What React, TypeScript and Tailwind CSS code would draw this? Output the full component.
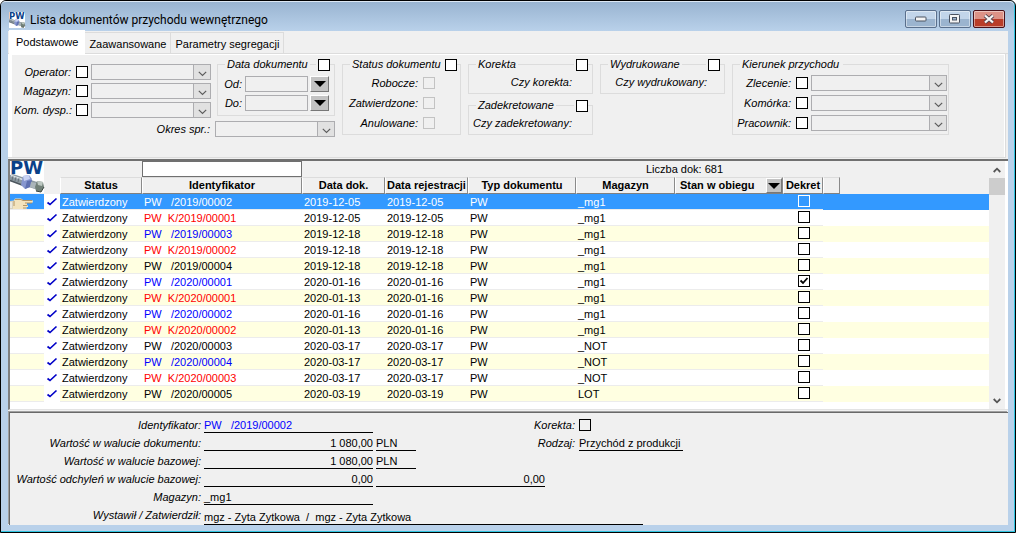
import { useState, type ReactNode } from 'react';

type Tone = 'black' | 'blue' | 'red';

interface Doc {
  id: string;
  tone: Tone;
  issued: string;
  registered: string;
  store: string;
  posted?: boolean;
}

const docs: Doc[] = [
  { id: 'PW   /2019/00002', tone: 'blue', issued: '2019-12-05', registered: '2019-12-05', store: '_mg1' },
  { id: 'PW  K/2019/00001', tone: 'red', issued: '2019-12-05', registered: '2019-12-05', store: '_mg1' },
  { id: 'PW   /2019/00003', tone: 'blue', issued: '2019-12-18', registered: '2019-12-18', store: '_mg1' },
  { id: 'PW  K/2019/00002', tone: 'red', issued: '2019-12-18', registered: '2019-12-18', store: '_mg1' },
  { id: 'PW   /2019/00004', tone: 'black', issued: '2019-12-18', registered: '2019-12-18', store: '_mg1' },
  { id: 'PW   /2020/00001', tone: 'blue', issued: '2020-01-16', registered: '2020-01-16', store: '_mg1', posted: true },
  { id: 'PW  K/2020/00001', tone: 'red', issued: '2020-01-13', registered: '2020-01-16', store: '_mg1' },
  { id: 'PW   /2020/00002', tone: 'blue', issued: '2020-01-16', registered: '2020-01-16', store: '_mg1' },
  { id: 'PW  K/2020/00002', tone: 'red', issued: '2020-01-13', registered: '2020-01-16', store: '_mg1' },
  { id: 'PW   /2020/00003', tone: 'black', issued: '2020-03-17', registered: '2020-03-17', store: '_NOT' },
  { id: 'PW   /2020/00004', tone: 'blue', issued: '2020-03-17', registered: '2020-03-17', store: '_NOT' },
  { id: 'PW  K/2020/00003', tone: 'red', issued: '2020-03-17', registered: '2020-03-17', store: '_NOT' },
  { id: 'PW   /2020/00005', tone: 'black', issued: '2020-03-19', registered: '2020-03-19', store: 'LOT' },
];

const toneClass: Record<Tone, string> = {
  black: 'text-black',
  blue: 'text-[#0000ff]',
  red: 'text-[#ff0000]',
};

function PwLogo({ className }: { className: string }) {
  return (
    <svg viewBox="0 0 34 32" preserveAspectRatio="none" className={`overflow-visible ${className}`} aria-hidden="true">
      <rect width="34" height="32" fill="#fff" />
      <g>
        <path d="M0 14 L3 13 L30 22 L28 29 L0 20Z" fill="#8b98a0" />
        <path d="M1 14.500 L14 19" stroke="#dce3e6" strokeWidth="1.6" />
        <path d="M0 19.500 L12 24" stroke="#4d565e" strokeWidth="1.4" />
        <path d="M3 15 l-1 4 M6 16 l-1 4 M9 17 l-1 4" stroke="#5d6870" strokeWidth="0.8" />
        <path d="M13 15 L19 14 L22 18 L20 26 L15 28 L11 24Z" fill="#8797cf" />
        <path d="M13 15 L19 14 L20 18 L14 20Z" fill="#c9d2f2" />
        <path d="M17 20 L22 19 L20 26 L15 28Z" fill="#5f70b0" />
        <path d="M21 21 L27 22 L26 28 L20 26Z" fill="#aab5ba" />
        <path d="M27 20 L33 21 L34 26 L31 31 L26 30 L25 26Z" fill="#718078" />
        <path d="M27 20 L33 21 L32 25 L28 24Z" fill="#bdc8c2" />
        <path d="M26 30 L31 31 L34 26" fill="none" stroke="#39443f" strokeWidth="1" />
      </g>
      <text x="0" y="13" fontFamily="DejaVu Sans, sans-serif" fontWeight="700" fontSize="18" fill="#0a4189">
        PW
      </text>
    </svg>
  );
}

function Check({ label, checked = false, disabled = false, light = false, clear = false, id }: {
  label?: string; checked?: boolean; disabled?: boolean; light?: boolean; clear?: boolean; id?: string;
}) {
  const [on, setOn] = useState(checked);
  const edge = disabled ? 'border-[#c3c3c3]' : light ? 'border-white' : 'border-black';
  const fill = disabled || clear ? 'bg-transparent' : 'bg-white';
  return (
    <span className="relative block size-3 shrink-0">
      <input
        id={id}
        type="checkbox"
        aria-label={label}
        checked={on}
        disabled={disabled}
        onChange={() => setOn(!on)}
        className={`block size-3 appearance-none border ${edge} ${fill}`}
      />
      {on && (
        <svg viewBox="0 0 12 12" className="pointer-events-none absolute inset-0 size-3">
          <path d="M2.500 5.500 L5 8 L9.500 3" fill="none" stroke="#000" strokeWidth="1.8" />
        </svg>
      )}
    </span>
  );
}

function Combo({ label, className }: { label: string; className: string }) {
  return (
    <span className={`relative block h-4 ${className}`}>
      <select aria-label={label} disabled className="block h-4 w-full appearance-none border border-[#adadb0] bg-[#f0f0f0] opacity-100">
        <option></option>
      </select>
      <span className="pointer-events-none absolute right-0 top-0 flex h-4 w-[18px] items-end justify-center border border-[#adadb0] bg-[#e1e1e1] pb-0.5">
        <svg viewBox="0 0 9 6" className="h-1.5 w-[9px]">
          <path d="M0.8 0.8 L4.5 4.5 L8.2 0.8" fill="none" stroke="#5f5f5f" strokeWidth="1.2" />
        </svg>
      </span>
    </span>
  );
}

function DropButton({ label, className }: { label: string; className: string }) {
  return (
    <button type="button" aria-label={label} className={`flex items-center justify-center border border-b-[#777] border-l-white border-r-[#777] border-t-white bg-[#c3c3c3] ${className}`}>
      <svg viewBox="0 0 12 6" className="h-1.5 w-3">
        <path d="M0 0 H12 L6 6Z" fill="#000" />
      </svg>
    </button>
  );
}

function Group({ title, check = true, className, children }: { title: string; check?: boolean; className: string; children: ReactNode }) {
  return (
    <fieldset className={`min-w-0 border border-[#dcdcdc] ${className}`}>
      <legend className={`ml-[7px] flex h-[13px] items-center gap-0.5 pl-0.5 ${check ? 'w-[calc(100%-11px)]' : 'pr-1'}`}>
        <span className="whitespace-nowrap">{title}</span>
        {check && (
          <>
            <span className="h-px flex-1 bg-[#dcdcdc]" />
            <Check label={title} />
          </>
        )}
      </legend>
      {children}
    </fieldset>
  );
}

function FilterRow({ label, id }: { label: string; id: string }) {
  return (
    <div className="flex h-4 items-center">
      <label htmlFor={id} className="w-[57px] whitespace-nowrap text-right">{label}</label>
      <span className="ml-[5px] mr-[3px]"><Check id={id} /></span>
      <Combo label={label} className="w-[120px]" />
    </div>
  );
}

function DateRow({ label, id }: { label: string; id: string }) {
  return (
    <div className="flex h-4 items-center">
      <label htmlFor={id} className="w-6 text-right">{label}</label>
      <input id={id} disabled className="ml-[3px] h-4 w-[63px] border border-[#adadb0] bg-[#f0f0f0]" />
      <DropButton label={`Wybierz: ${label}`} className="ml-0.5 h-4 w-[19px]" />
    </div>
  );
}

function Filters() {
  return (
    <div className="flex gap-[7px] bg-[#f0f0f0] pb-5 pl-0.5 pt-[3px] italic">
      <div className="flex w-[321px] shrink-0 flex-col gap-[3px]">
        <div className="flex items-start justify-between">
          <div className="flex flex-col gap-[3px] pt-1.5">
            <FilterRow label="Operator:" id="operator" />
            <FilterRow label="Magazyn:" id="magazyn" />
            <FilterRow label="Kom. dysp.:" id="komdysp" />
          </div>
          <Group title="Data dokumentu" className="w-[118px]">
            <div className="flex flex-col gap-[3px] pb-1 pt-[5px]">
              <DateRow label="Od:" id="od" />
              <DateRow label="Do:" id="do" />
            </div>
          </Group>
        </div>
        <div className="flex items-center justify-end gap-[5px]">
          <span>Okres spr.:</span>
          <Combo label="Okres spr." className="w-[120px]" />
        </div>
      </div>
      <Group title="Status dokumentu" className="h-[77px] w-[119px] shrink-0">
        <div className="flex flex-col gap-1 pr-[25px] pt-1">
          {['Robocze:', 'Zatwierdzone:', 'Anulowane:'].map((t) => (
            <label key={t} className="flex h-4 items-center justify-end gap-[5px]">
              {t}
              <Check disabled />
            </label>
          ))}
        </div>
      </Group>
      <div className="flex w-[125px] shrink-0 flex-col gap-[5px]">
        <Group title="Korekta" className="h-9">
          <p className="pr-5 pt-[5px] text-right">Czy korekta:</p>
        </Group>
        <Group title="Zadekretowane" className="h-9">
          <p className="whitespace-nowrap pr-5 pt-[5px] text-right">Czy zadekretowany:</p>
        </Group>
      </div>
      <Group title="Wydrukowane" className="h-9 w-[125px] shrink-0">
        <p className="whitespace-nowrap pr-[17px] pt-[5px] text-right">Czy wydrukowany:</p>
      </Group>
      <Group title="Kierunek przychodu" check={false} className="h-[77px] w-[217px] shrink-0">
        <div className="flex flex-col gap-1 pt-1">
          {['Zlecenie:', 'Komórka:', 'Pracownik:'].map((t) => (
            <div key={t} className="flex h-4 items-center">
              <label htmlFor={t} className="w-[58px] text-right">{t}</label>
              <span className="ml-[5px] mr-[3px]"><Check id={t} /></span>
              <Combo label={t} className="w-[136px]" />
            </div>
          ))}
        </div>
      </Group>
    </div>
  );
}

const headCell = 'h-[17px] overflow-hidden whitespace-nowrap border border-b-[#808080] border-l-white border-r-[#8a8a8a] border-t-[#dcdcdc] bg-[#f0f0f0] p-0 font-bold';

function Hand() {
  return (
    <svg viewBox="0 0 24 11" className="block h-[11px] w-6" aria-hidden="true">
      <path d="M0 3 L4 2.500 L5 0.500 H11 L13 2 H22 Q24 3.500 22 5 H17 V7 H18 V9 H16.500 V11 H0Z" fill="#f3e3bd" />
      <path d="M5 1.500 H11 L13 2.500 H22 M15 5 H22 M13 7.500 H17.500 M13 10 H16 M4 3 V8" fill="none" stroke="#ab8b5a" strokeWidth="0.9" />
      <path d="M0 3 H3 V11 H0Z" fill="#d8d2bf" />
      <path d="M1 4 v6" stroke="#fff" strokeWidth="1" />
    </svg>
  );
}

function DocTable() {
  return (
    <table className="w-full table-fixed border-separate border-spacing-0 text-left">
      <colgroup>
        <col className="w-[34px]" />
        <col className="w-4" />
        <col className="w-[82px]" />
        <col className="w-40" />
        <col className="w-[83px]" />
        <col className="w-[83px]" />
        <col className="w-[108px]" />
        <col className="w-[99px]" />
        <col className="w-[108px]" />
        <col className="w-10" />
        <col className="w-[17px]" />
        <col />
      </colgroup>
      <thead className="bg-[#f0f0f0]">
        <tr className="h-4">
          <td rowSpan={2} colSpan={2} className="p-0 align-top">
            <PwLogo className="block h-8 w-[34px]" />
          </td>
          <td className="p-0" />
          <td className="p-0">
            <input aria-label="Szukaj identyfikatora" className="block h-4 w-full border border-[#707070] bg-white px-1" />
          </td>
          <td colSpan={3} className="p-0" />
          <td colSpan={5} className="p-0 pl-[70px] pt-px">Liczba dok: 681</td>
        </tr>
        <tr className="text-center">
          <th className={headCell}>Status</th>
          <th className={headCell}>Identyfikator</th>
          <th className={headCell}>Data dok.</th>
          <th className={headCell}>Data rejestracji</th>
          <th className={headCell}>Typ dokumentu</th>
          <th className={headCell}>Magazyn</th>
          <th className={headCell}>
            <div className="flex items-center justify-between pl-1">
              <span>Stan w obiegu</span>
              <DropButton label="Filtr stanu w obiegu" className="h-[15px] w-4" />
            </div>
          </th>
          <th className={headCell}>Dekret</th>
          <th className={headCell} aria-label="Inne" />
          <td className="p-0" />
        </tr>
      </thead>
      <tbody>
        {docs.map((d, i) => {
          const selected = i === 0;
          const band = selected ? 'bg-[#3399ff] text-white' : i % 2 === 0 ? 'bg-[#ffffe1]' : 'bg-white';
          const cell = 'h-4 whitespace-nowrap border-b border-[#ececec] p-0 pl-0.5 pt-0.5';
          return (
            <tr key={d.id} className={band}>
              <td className="h-4 border-b border-[#ececec] p-0 align-bottom">{selected && <Hand />}</td>
              <td className="h-4 bg-white p-0">
                <svg viewBox="0 0 16 15" className="block h-[15px] w-4" aria-label="zatwierdzony">
                  <path d="M3.500 7.500 L6 9.500 L12.500 3.500" fill="none" stroke="#0000c8" strokeWidth="1.700" />
                </svg>
              </td>
              <td className={cell}>Zatwierdzony</td>
              <td className={`${cell} whitespace-pre ${selected ? 'text-white' : toneClass[d.tone]}`}>{d.id}</td>
              <td className={cell}>{d.issued}</td>
              <td className={cell}>{d.registered}</td>
              <td className={cell}>PW</td>
              <td className={cell}>{d.store}</td>
              <td className={cell} />
              <td className="h-4 border-b border-[#ececec] p-0 align-top">
                <div className="flex justify-center pl-0.5 pt-px">
                  <Check label={`Dekret ${d.id}`} checked={d.posted} light={selected} clear={selected} />
                </div>
              </td>
              <td className="p-0" />
              <td className="p-0" />
            </tr>
          );
        })}
      </tbody>
    </table>
  );
}

function Scroller() {
  return (
    <div className="flex w-4 shrink-0 flex-col bg-[#f0f0f0]">
      <button type="button" aria-label="W górę" className="flex h-[17px] items-center justify-center">
        <svg viewBox="0 0 8 6" className="h-1.5 w-2"><path d="M0.700 5 L4 1.700 L7.300 5" fill="none" stroke="#555" strokeWidth="1.8" /></svg>
      </button>
      <div className="h-[17px] bg-[#cdcdcd]" />
      <div className="flex-1" />
      <button type="button" aria-label="W dół" className="flex h-[17px] items-center justify-center">
        <svg viewBox="0 0 8 6" className="h-1.5 w-2"><path d="M0.700 1 L4 4.300 L7.300 1" fill="none" stroke="#555" strokeWidth="1.8" /></svg>
      </button>
    </div>
  );
}

function Value({ children, className }: { children?: ReactNode; className: string }) {
  return <span className={`flex h-[18px] shrink-0 items-end whitespace-pre border-b border-black ${className}`}>{children}</span>;
}

function DetailRow({ label, children }: { label: string; children: ReactNode }) {
  return (
    <div className="flex h-[18px] gap-[3px]">
      <span className="w-[191px] shrink-0 whitespace-nowrap pt-1 text-right italic">{label}</span>
      {children}
    </div>
  );
}

function Details() {
  return (
    <section className="flex border-l border-t border-[#696969] bg-[#f0f0f0] pt-0.5 shadow-[-1px_-1px_0_#a0a0a0]">
      <div className="flex w-[524px] shrink-0 flex-col">
        <DetailRow label="Identyfikator:"><Value className="w-[169px] text-[#0000ff]">{'PW   /2019/00002'}</Value></DetailRow>
        <DetailRow label="Wartość w walucie dokumentu:">
          <Value className="w-[169px] justify-end">1 080,00</Value>
          <Value className="w-10">PLN</Value>
        </DetailRow>
        <DetailRow label="Wartość w walucie bazowej:">
          <Value className="w-[169px] justify-end">1 080,00</Value>
          <Value className="w-10">PLN</Value>
        </DetailRow>
        <DetailRow label="Wartość odchyleń w walucie bazowej:">
          <Value className="w-[169px] justify-end">0,00</Value>
          <Value className="w-[169px] justify-end">0,00</Value>
        </DetailRow>
        <DetailRow label="Magazyn:"><Value className="w-[169px]">_mg1</Value></DetailRow>
        <div className="flex h-5 gap-[3px]">
          <span className="w-[191px] shrink-0 whitespace-nowrap pt-1 text-right italic">Wystawił / Zatwierdził:</span>
          <span className="flex h-5 w-[439px] shrink-0 items-end whitespace-pre border-b border-black">{'mgz - Zyta Zytkowa  /  mgz - Zyta Zytkowa'}</span>
        </div>
      </div>
      <div className="flex flex-col">
        <div className="flex h-[18px] gap-1">
          <label htmlFor="korekta-doc" className="w-[41px] pt-1 text-right italic">Korekta:</label>
          <span className="pt-1"><Check id="korekta-doc" clear /></span>
        </div>
        <div className="flex h-[18px] gap-1">
          <span className="w-[41px] pt-1 text-right italic">Rodzaj:</span>
          <Value className="w-[104px]">Przychód z produkcji</Value>
        </div>
      </div>
    </section>
  );
}

function TitleBar() {
  const btn = 'flex h-[18px] w-8 items-center justify-center rounded-[2px] border shadow-[inset_0_0_0_1px_rgba(255,255,255,0.45)]';
  return (
    <header className="flex h-[29px] shrink-0 items-start justify-between bg-linear-to-b from-[#99b4d1] to-[#b9d1ea] pl-2 pr-[9px] pt-2">
      <div className="flex items-center gap-[5px]">
        <PwLogo className="size-4" />
        <h1 className="font-[Roboto,'Open_Sans',sans-serif] text-[12px] leading-5">Lista dokumentów przychodu wewnętrznego</h1>
      </div>
      <div className="flex gap-0.5">
        <button type="button" aria-label="Minimalizuj" className={`${btn} border-[#5a6f8c] bg-linear-to-b from-[#c2d5ea] from-50% to-[#9bb4cf] to-50%`}>
          <svg viewBox="0 0 12 6" className="h-1.5 w-3"><rect x="0.500" y="1" width="10.500" height="4" rx="0.800" fill="#f4f4f4" stroke="#4a5260" /></svg>
        </button>
        <button type="button" aria-label="Maksymalizuj" className={`${btn} border-[#5a6f8c] bg-linear-to-b from-[#c2d5ea] from-50% to-[#9bb4cf] to-50%`}>
          <svg viewBox="0 0 12 10" className="h-2.5 w-3">
            <rect x="0.500" y="0.500" width="10" height="8.500" rx="0.800" fill="#f4f4f4" stroke="#4a5260" />
            <rect x="3.500" y="3.500" width="4" height="2.500" fill="#9bb4cf" stroke="#4a5260" />
          </svg>
        </button>
        <button type="button" aria-label="Zamknij" className={`${btn} border-[#4a1018] bg-linear-to-b from-[#dd9286] from-50% to-[#b93d29] to-50%`}>
          <svg viewBox="0 0 12 10" className="h-2.5 w-3">
            <path d="M2 1.500 L10 8.500 M10 1.500 L2 8.500" stroke="#5a4650" strokeWidth="4" />
            <path d="M2 1.500 L10 8.500 M10 1.500 L2 8.500" stroke="#f6f6f6" strokeWidth="2.300" />
          </svg>
        </button>
      </div>
    </header>
  );
}

export default function App() {
  const tab = 'h-[21px] border-r border-t border-[#dcdcdc] px-1 pt-0.5';
  return (
    <div className="flex min-h-screen flex-col bg-white pb-0.5 font-['Liberation_Sans',Arial,sans-serif] text-[11px] leading-[13px] text-black">
      <div className="flex flex-1 flex-col rounded-t-[6px] border border-black bg-[#b9d1ea] shadow-[inset_-1px_-1px_0_#2fc4e0]">
        <div className="mb-px mr-px flex flex-1 flex-col overflow-hidden rounded-t-[5px] border-t border-[#dde8f4]">
          <TitleBar />
          <main className="mb-1.5 ml-[7px] mr-1.5 flex flex-1 flex-col bg-[#f0f0f0]">
            <nav role="tablist" className="flex h-[23px] items-end border-b border-[#dcdcdc] pl-px">
              <button role="tab" aria-selected="true" type="button" className="-mb-px h-6 bg-white px-[7px]">Podstawowe</button>
              <button role="tab" aria-selected="false" type="button" className={tab}>Zaawansowane</button>
              <button role="tab" aria-selected="false" type="button" className={tab}>Parametry segregacji</button>
            </nav>
            <div className="mr-0.5 border-b border-r border-[#dcdcdc] bg-white pl-1 pr-px pt-px">
              <Filters />
            </div>
            <section className="mt-px flex flex-1 border-b border-l-2 border-t-2 border-b-[#e3e3e3] border-l-[#808080] border-t-[#707070] bg-white">
              <div className="min-w-0 flex-1"><DocTable /></div>
              <Scroller />
              <div className="w-[3px] bg-white" />
            </section>
            <div className="mt-0.5 pl-px">
              <Details />
            </div>
          </main>
        </div>
      </div>
    </div>
  );
}
